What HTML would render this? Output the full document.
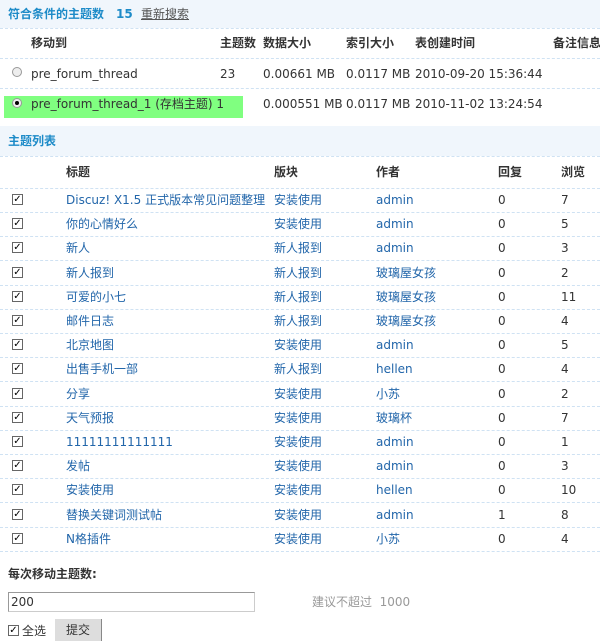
<!DOCTYPE html>
<html><head><meta charset="utf-8"><style>
*{margin:0;padding:0;box-sizing:border-box}
body{width:600px;height:640px;background:#fff;font:12px "DejaVu Sans","Noto Sans CJK SC",sans-serif;color:#333;position:relative;overflow:hidden}
.a{position:absolute;white-space:nowrap;line-height:16px}
.band{position:absolute;left:0;width:600px;background:#f0f6fc}
.hl{position:absolute;left:0;width:600px;border-top:1px dashed #cfe2f3;height:0}
.t{color:#1d8bc8;font-weight:bold;font-size:12px}
.b{font-weight:bold;color:#333}
.l{color:#2266aa}
.cb{position:absolute;width:11px;height:11px;border:1px solid #666;background:#fff;font-size:10px;line-height:9px;text-align:center;color:#000;font-weight:bold}
.row{position:absolute;left:0;width:600px;height:24.2px}
.row .a{top:4px}
</style></head><body>
<div class="band" style="top:0;height:28px"></div>
<div class="a t" style="left:8px;top:6px">符合条件的主题数</div>
<div class="a t" style="left:116px;top:6px">15</div>
<div class="a" style="left:141px;top:6px;text-decoration:underline;color:#555">重新搜索</div>
<div class="hl" style="top:28px"></div>
<div class="a b" style="left:31px;top:35px">移动到</div>
<div class="a b" style="left:220px;top:35px">主题数</div>
<div class="a b" style="left:263px;top:35px">数据大小</div>
<div class="a b" style="left:346px;top:35px">索引大小</div>
<div class="a b" style="left:415px;top:35px">表创建时间</div>
<div class="a b" style="left:553px;top:35px">备注信息</div>
<div class="hl" style="top:58px"></div>
<div class="a" style="left:12px;top:67px;width:10px;height:10px;border-radius:50%;border:1px solid #999;background:#eee"></div>
<div class="a" style="left:31px;top:66px">pre_forum_thread</div>
<div class="a" style="left:220px;top:66px">23</div>
<div class="a" style="left:263px;top:66px">0.00661 MB</div>
<div class="a" style="left:346px;top:66px">0.0117 MB</div>
<div class="a" style="left:415px;top:66px">2010-09-20 15:36:44</div>
<div class="hl" style="top:88px"></div>
<div class="a" style="left:4px;top:96px;width:239px;height:22px;background:#80ff80"></div>
<div class="a" style="left:12px;top:98px;width:10px;height:10px;border-radius:50%;border:1px solid #999;background:#eee"></div>
<div class="a" style="left:15px;top:101px;width:4px;height:4px;border-radius:50%;background:#000"></div>
<div class="a" style="left:31px;top:96px">pre_forum_thread_1 (存档主题) 1</div>
<div class="a" style="left:263px;top:96px">0.000551 MB</div>
<div class="a" style="left:346px;top:96px">0.0117 MB</div>
<div class="a" style="left:415px;top:96px">2010-11-02 13:24:54</div>
<div class="band" style="top:126px;height:30px"></div>
<div class="a t" style="left:8px;top:133px">主题列表</div>
<div class="hl" style="top:156px"></div>
<div class="a b" style="left:66px;top:164px">标题</div>
<div class="a b" style="left:274px;top:164px">版块</div>
<div class="a b" style="left:376px;top:164px">作者</div>
<div class="a b" style="left:498px;top:164px">回复</div>
<div class="a b" style="left:561px;top:164px">浏览</div>
<div class="hl" style="top:188px"></div>
<div id="rows"></div>
<script>
var d=[["Discuz! X1.5 正式版本常见问题整理","安装使用","admin",0,7],["你的心情好么","安装使用","admin",0,5],["新人","新人报到","admin",0,3],["新人报到","新人报到","玻璃屋女孩",0,2],["可爱的小七","新人报到","玻璃屋女孩",0,11],["邮件日志","新人报到","玻璃屋女孩",0,4],["北京地图","安装使用","admin",0,5],["出售手机一部","新人报到","hellen",0,4],["分享","安装使用","小苏",0,2],["天气预报","安装使用","玻璃杯",0,7],["11111111111111","安装使用","admin",0,1],["发帖","安装使用","admin",0,3],["安装使用","安装使用","hellen",0,10],["替换关键词测试帖","安装使用","admin",1,8],["N格插件","安装使用","小苏",0,4]];
var h="";
for(var i=0;i<d.length;i++){var y=188+i*24.2;var r=d[i];
h+='<div class="row" style="top:'+y+'px"><div class="cb" style="left:12px;top:6px">✓</div><div class="a l" style="left:66px">'+r[0]+'</div><div class="a l" style="left:274px">'+r[1]+'</div><div class="a l" style="left:376px">'+r[2]+'</div><div class="a" style="left:498px">'+r[3]+'</div><div class="a" style="left:561px">'+r[4]+'</div><div class="hl" style="top:24px"></div></div>';}
document.getElementById("rows").innerHTML=h;
</script>
<div class="a b" style="left:8px;top:566px">每次移动主题数:</div>
<div class="a" style="left:8px;top:592px;width:247px;height:20px;border:1px solid #999;border-right-color:#ccc;border-bottom-color:#ccc;padding:1px 2px;line-height:16px">200</div>
<div class="a" style="left:312px;top:594px;color:#999">建议不超过&nbsp; 1000</div>
<div class="cb" style="left:8px;top:625px">✓</div>
<div class="a" style="left:22px;top:623px">全选</div>
<div class="a" style="left:55px;top:619px;width:47px;height:22px;background:#ddd;border-right:1px solid #888;text-align:center;line-height:22px">提交</div>
</body></html>
